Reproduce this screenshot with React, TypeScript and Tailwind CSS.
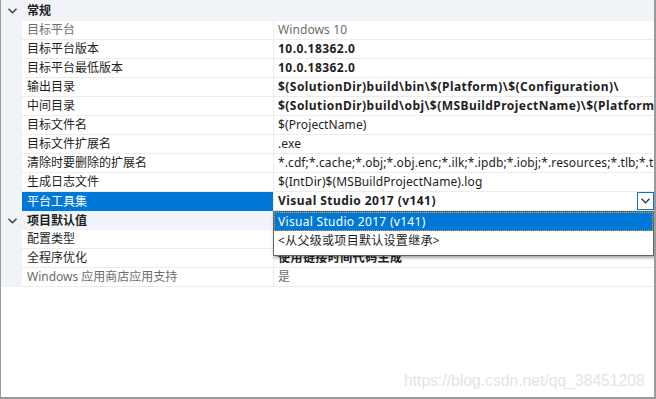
import React from 'react';

interface PropRow {
  label: string;
  value: string;
  bold?: boolean;
  dim?: boolean;
  selected?: boolean;
}

interface Section {
  title: string;
  rows: PropRow[];
}

const sections: Section[] = [
  {
    title: '常规',
    rows: [
      { label: '目标平台', value: 'Windows 10', dim: true },
      { label: '目标平台版本', value: '10.0.18362.0', bold: true },
      { label: '目标平台最低版本', value: '10.0.18362.0', bold: true },
      { label: '输出目录', value: '$(SolutionDir)build\\bin\\$(Platform)\\$(Configuration)\\', bold: true },
      { label: '中间目录', value: '$(SolutionDir)build\\obj\\$(MSBuildProjectName)\\$(Platform)\\$(Configuration)\\', bold: true },
      { label: '目标文件名', value: '$(ProjectName)' },
      { label: '目标文件扩展名', value: '.exe' },
      { label: '清除时要删除的扩展名', value: '*.cdf;*.cache;*.obj;*.obj.enc;*.ilk;*.ipdb;*.iobj;*.resources;*.tlb;*.tli;*.tlh;*.tmp;*.rsp' },
      { label: '生成日志文件', value: '$(IntDir)$(MSBuildProjectName).log' },
      { label: '平台工具集', value: 'Visual Studio 2017 (v141)', bold: true, selected: true },
    ],
  },
  {
    title: '项目默认值',
    rows: [
      { label: '配置类型', value: '应用程序(.exe)', bold: true },
      { label: '全程序优化', value: '使用链接时间代码生成', bold: true },
      { label: 'Windows 应用商店应用支持', value: '是', dim: true },
    ],
  },
];

const Chevron: React.FC<{ className?: string }> = ({ className }) => (
  <svg width="9" height="6" viewBox="0 0 9 6" className={className}>
    <path d="M0.5 0.8 L4.5 4.8 L8.5 0.8" fill="none" stroke="currentColor" strokeWidth="1.4" />
  </svg>
);

const App: React.FC = () => {
  return (
    <div
      className="relative w-[656px] h-[399px] bg-white border-l border-r-2 border-b-2 border-[#9a9a9a] overflow-hidden text-[12px] text-[#1e1e1e]"
      style={{ fontFamily: '"Noto Sans", "Noto Sans CJK SC", sans-serif' }}
    >
      {sections.map((section, si) => (
        <div key={si}>
          <div className={`flex items-center bg-[#f0f4f9] ${si === 0 ? 'h-[21px]' : 'h-[19px]'}`}>
            <div className="w-[21px] flex justify-center pl-[1px] text-[#3c3c3c]">
              <Chevron />
            </div>
            <span className="pl-[5px] font-bold leading-none">{section.title}</span>
          </div>
          {section.rows.map((row, ri) => (
            <div key={ri} className="flex h-[19px]">
              <div className="w-[21px] shrink-0 bg-[#f0f4f9]" />
              <div
                className={`w-[252px] shrink-0 flex items-center pl-[5px] whitespace-nowrap overflow-hidden border-r border-[#ececec] ${
                  row.selected
                    ? 'bg-[#0078d7] text-white'
                    : `border-b ${row.dim ? 'text-[#6d6d6d]' : ''}`
                }`}
              >
                {row.label}
              </div>
              <div
                className={`relative flex-1 min-w-0 flex items-center pl-[4px] whitespace-nowrap overflow-hidden border-b border-[#ececec] ${
                  row.bold ? 'font-bold tracking-[0.45px]' : 'tracking-[0.1px]'
                } ${row.dim ? 'text-[#6d6d6d]' : ''}`}
              >
                {row.value}
                {row.selected && (
                  <div className="absolute right-0 top-0 w-[17px] h-[18px] border border-[#0078d7] bg-white flex items-center justify-center text-[#3c3c3c]">
                    <Chevron />
                  </div>
                )}
              </div>
            </div>
          ))}
        </div>
      ))}

      {/* dropdown list */}
      <div className="absolute left-[272px] top-[211px] w-[381px] h-[45px] bg-white border border-[#646464] shadow-[1px_2px_3px_rgba(0,0,0,0.35)] tracking-[0.3px]">
        <div className="h-[19px] bg-[#0078d7] text-white flex items-center pl-[3px] border border-dotted border-[#e0a040]">
          Visual Studio 2017 (v141)
        </div>
        <div className="h-[19px] flex items-center pl-[4px]">&lt;从父级或项目默认设置继承&gt;</div>
      </div>

      <div
        className="absolute left-[403px] top-[369px] text-[15.7px] text-[#e4e4e4] whitespace-nowrap"
        style={{ fontFamily: '"Liberation Sans", Arial, sans-serif' }}
      >
        https://blog.csdn.net/qq_38451208
      </div>
    </div>
  );
};

export default App;
